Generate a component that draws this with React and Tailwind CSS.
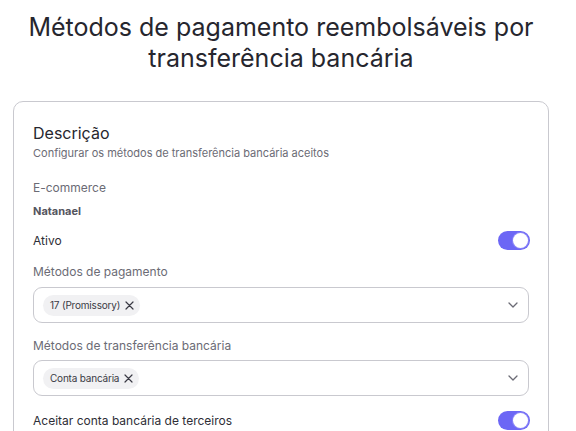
import React from 'react';

function Toggle() {
    return (
        <div className="w-[32px] h-[19px] rounded-full bg-[#6c66f5] flex items-center justify-end pr-[2px]">
            <div className="w-[15px] h-[15px] rounded-full bg-white ring-1 ring-[#8a85f7]"></div>
        </div>
    );
}

function Chevron() {
    return (
        <svg width="10" height="6" viewBox="0 0 10 6" fill="none">
            <path d="M1 1l4 4 4-4" stroke="#6b6b75" strokeWidth="1.3" strokeLinecap="round" strokeLinejoin="round" />
        </svg>
    );
}

function MultiSelect({ value }) {
    return (
        <div className="h-[36px] border border-[#c9c9cf] rounded-[9px] flex items-center justify-between pl-[9px] pr-[10px]">
            <div className="h-[21px] rounded-full bg-[#f1f1f3] flex items-center gap-[5px] pl-[7px] pr-[6px] text-[10px] tracking-[-0.2px] text-[#3a3a44]">
                <span>{value}</span>
                <svg width="9" height="9" viewBox="0 0 9 9" fill="none">
                    <path d="M1 1l7 7M8 1l-7 7" stroke="#3a3a44" strokeWidth="1.2" strokeLinecap="round" />
                </svg>
            </div>
            <Chevron />
        </div>
    );
}

export default function App() {
    return (
        <div className="w-[576px] h-[431px] overflow-hidden bg-white font-['Inter',sans-serif]">
            <div className="w-[562px]">
                {/* Title */}
                <h1 className="pt-[12px] text-center text-[25px] leading-[31px] text-[#26262e] font-normal">
                    Métodos de pagamento reembolsáveis por
                    <br />
                    transferência bancária
                </h1>

                {/* Card */}
                <div className="mx-[13px] mt-[27px] border border-[#c9c9cf] rounded-[10px] pl-[19px] pr-[19px] pt-[19px] pb-[20px]">
                    <h2 className="text-[16px] leading-[24px] text-[#26262e]">Descrição</h2>
                    <p className="text-[11px] leading-[16px] text-[#6b6b75]">Configurar os métodos de transferência bancária aceitos</p>

                    <p className="mt-[19px] text-[12px] leading-[16px] text-[#6b6b75]">E-commerce</p>
                    <p className="mt-[7px] text-[11px] leading-[16px] font-bold text-[#55555e]">Natanael</p>

                    <div className="mt-[12px] flex items-center justify-between -mr-[1px]">
                        <span className="text-[12px] text-[#2e2e36]">Ativo</span>
                        <Toggle />
                    </div>

                    <p className="mt-[14px] text-[12px] leading-[16px] text-[#6b6b75]">Métodos de pagamento</p>
                    <div className="mt-[7px]">
                        <MultiSelect value="17 (Promissory)" />
                    </div>

                    <p className="mt-[15px] text-[12px] leading-[16px] text-[#6b6b75]">Métodos de transferência bancária</p>
                    <div className="mt-[6px]">
                        <MultiSelect value="Conta bancária" />
                    </div>

                    <div className="mt-[15px] flex items-center justify-between -mr-[1px]">
                        <span className="text-[12px] text-[#2e2e36]">Aceitar conta bancária de terceiros</span>
                        <Toggle />
                    </div>
                </div>
            </div>
        </div>
    );
}
